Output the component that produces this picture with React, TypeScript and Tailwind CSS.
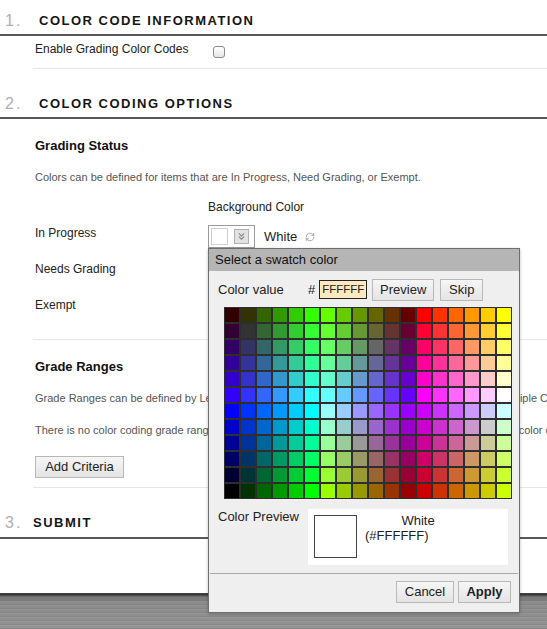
import { ChevronsDown, RefreshCw } from "lucide-react"

const HEX = ["00", "33", "66", "99", "CC", "FF"]

// classic 18x12 web-safe swatch layout
function swatchColor(row: number, col: number) {
  const block = Math.floor(col / 6)
  const idx = col % 6
  const g = block === 1 ? HEX[5 - idx] : HEX[idx]
  if (row < 6) return "#" + ["33", "66", "FF"][block] + g + HEX[row]
  return "#" + ["00", "99", "CC"][block] + g + HEX[11 - row]
}

function SectionHeading({ num, title, h, numW }: { num: string; title: string; h: string; numW: string }) {
  return (
    <div className={`flex items-end border-b-2 border-[#585858] pb-[5px] ${h}`}>
      <span className={`${numW} pl-[5px] text-[16px] leading-[16px] tracking-[2px] text-[#b0b0b0]`}>{num}</span>
      <span className="text-[13px] font-bold tracking-[1.5px] text-[#151515] leading-[16px]">{title}</span>
    </div>
  )
}

function SwatchControl() {
  return (
    <div className="flex items-center">
      <div className="flex items-center w-[47px] h-[23px] border border-[#9a9a9a] bg-white">
        <span className="ml-[2px] w-[17px] h-[17px] border border-[#cfcfcf] bg-white" />
        <span className="ml-[6px] w-[15px] h-[15px] border border-[#b0b0b0] bg-[#e2e2e2] flex items-center justify-center">
          <ChevronsDown size={11} strokeWidth={2.5} className="text-[#8a8a8a]" />
        </span>
      </div>
      <span className="ml-[9px] text-[13px] text-[#222]">White</span>
      <RefreshCw size={10} strokeWidth={2} className="ml-[8px] mt-[1px] text-[#9a9a9a]" />
    </div>
  )
}

function Button({ label, w, bold }: { label: string; w: string; bold?: boolean }) {
  return (
    <div
      className={`${w} h-[22px] flex items-center justify-center border border-[#b8b8b8] bg-[linear-gradient(#f6f6f6,#e4e4e4)] text-[13px] text-[#222] ${bold ? "font-bold" : ""}`}
    >
      {label}
    </div>
  )
}

function SwatchPopup() {
  return (
    <div className="absolute left-[208px] top-[248px] z-10 w-[312px] h-[365px] border border-[#6e6e6e] bg-[#efefef] shadow-[0_1px_3px_rgba(0,0,0,0.25)]">
      <div className="h-[22px] bg-[#b5b5b5] pl-[6px] text-[13px] leading-[22px] text-[#111]">Select a swatch color</div>

      <div className="mt-[8px] h-[21px] flex items-center text-[13px] text-[#222]">
        <span className="w-[99px] pl-[9px]">Color value</span>
        <span>#</span>
        <div className="ml-[4px] w-[48px] h-[19px] border border-[#222] bg-[#fde9bf] pl-[2px] text-[11.5px] leading-[17px]">FFFFFF</div>
        <div className="ml-[5px]">
          <Button label="Preview" w="w-[62px]" />
        </div>
        <div className="ml-[6px]">
          <Button label="Skip" w="w-[43px]" />
        </div>
      </div>

      <div className="mt-[7px] ml-[15px] w-[288px] grid grid-cols-[repeat(18,14px)] gap-[2px] p-[1px] bg-[#2e2e2e]">
        {Array.from({ length: 12 }).map((_, r) =>
          Array.from({ length: 18 }).map((_, c) => (
            <div key={r + "-" + c} className="h-[14px]" style={{ backgroundColor: swatchColor(r, c) }} />
          ))
        )}
      </div>

      <div className="mt-[10px] flex">
        <span className="w-[99px] pl-[9px] text-[13px] leading-[16px] text-[#222]">Color Preview</span>
        <div className="w-[200px] h-[56px] bg-white p-[6px] flex">
          <div className="w-[43px] h-[43px] border border-[#444] bg-white" />
          <div className="ml-[8px] -mt-[2px] w-[106px] text-[13px] leading-[15px] text-[#222]">
            <div className="text-center">White</div>
            <div>(#FFFFFF)</div>
          </div>
        </div>
      </div>

      <div className="mt-[8px] mx-[1px] border-t border-[#a9a9a9]" />

      <div className="mt-[7px] pr-[8px] flex justify-end gap-[4px]">
        <Button label="Cancel" w="w-[58px]" />
        <Button label="Apply" w="w-[53px]" bold />
      </div>
    </div>
  )
}

export default function App() {
  return (
    <div className="relative h-[629px] w-full overflow-hidden bg-white font-['Liberation_Sans',Arial,sans-serif] flex flex-col">
      <SectionHeading num="1." title="COLOR CODE INFORMATION" h="h-[36px]" numW="w-[39px]" />

      <div className="ml-[33px] h-[33px] pb-[6px] pl-[2px] flex items-center border-b border-[#e6e6e6]">
        <span className="text-[12px] text-[#222]">Enable Grading Color Codes</span>
        <span className="ml-[25px] mt-[5px] w-[12px] h-[12px] rounded-[3px] border border-[#8c8c8c] bg-[linear-gradient(#ffffff,#e6e6e6)]" />
      </div>

      <SectionHeading num="2." title="COLOR CODING OPTIONS" h="h-[50px]" numW="w-[39px]" />

      <div className="ml-[33px]">
        <div className="pl-[2px]">
          <h3 className="mt-[19px] text-[13px] font-bold leading-[16px] text-[#111]">Grading Status</h3>
          <p className="mt-[15px] text-[11px] leading-[16px] text-[#555]">
            Colors can be defined for items that are In Progress, Need Grading, or Exempt.
          </p>
          <div className="mt-[14px] pl-[173px] text-[12px] leading-[16px] text-[#222]">Background Color</div>
          {["In Progress", "Needs Grading", "Exempt"].map((label, i) => (
            <div key={label} className="h-[36px] flex items-start">
              <span className="mt-[10px] w-[173px] text-[12px] leading-[16px] text-[#222]">{label}</span>
              {i === 0 && (
                <div className="mt-[10px]">
                  <SwatchControl />
                </div>
              )}
            </div>
          ))}
        </div>

        <div className="mt-[16px] border-t border-[#e6e6e6]" />

        <div className="pl-[2px]">
          <h3 className="mt-[19px] text-[13px] font-bold leading-[16px] text-[#111]">Grade Ranges</h3>
          <p className="mt-[15px] whitespace-nowrap text-[11px] leading-[16px] text-[#555]">
            Grade Ranges can be defined by Letter, Percentage, or Score and each range may be set with Multiple Criteria.
          </p>
          <p className="mt-[16px] whitespace-nowrap text-[11px] leading-[16px] text-[#555]">
            There is no color coding grade ranges defined yet. Click Add Criteria to create the grade range and color coding.
          </p>
          <div className="mt-[18px] w-[89px] h-[22px] flex items-center justify-center border border-[#b8b8b8] bg-[linear-gradient(#f6f6f6,#e4e4e4)] text-[13px] text-[#222]">
            Add Criteria
          </div>
        </div>

        <div className="mt-[9px] border-t border-[#e6e6e6]" />
      </div>

      <div className="flex items-end border-b-2 border-[#585858] pb-[6px] h-[51px]">
        <span className="w-[33px] pl-[5px] text-[16px] tracking-[2px] text-[#b0b0b0] leading-[16px]">3.</span>
        <span className="text-[13px] font-bold tracking-[1.5px] text-[#151515] leading-[16px]">SUBMIT</span>
      </div>

      <div className="mt-auto h-[36px] bg-[image:repeating-linear-gradient(180deg,rgba(255,255,255,0.07)_0px,rgba(255,255,255,0.07)_1px,transparent_1px,transparent_3px,rgba(0,0,0,0.06)_3px,rgba(0,0,0,0.06)_4px),linear-gradient(180deg,#2e2e2e_0px,#3a3a3a_2px,#6a6a6a_3px,#8a8a8a_9px,#939393_100%)]" />

      <SwatchPopup />
    </div>
  )
}
